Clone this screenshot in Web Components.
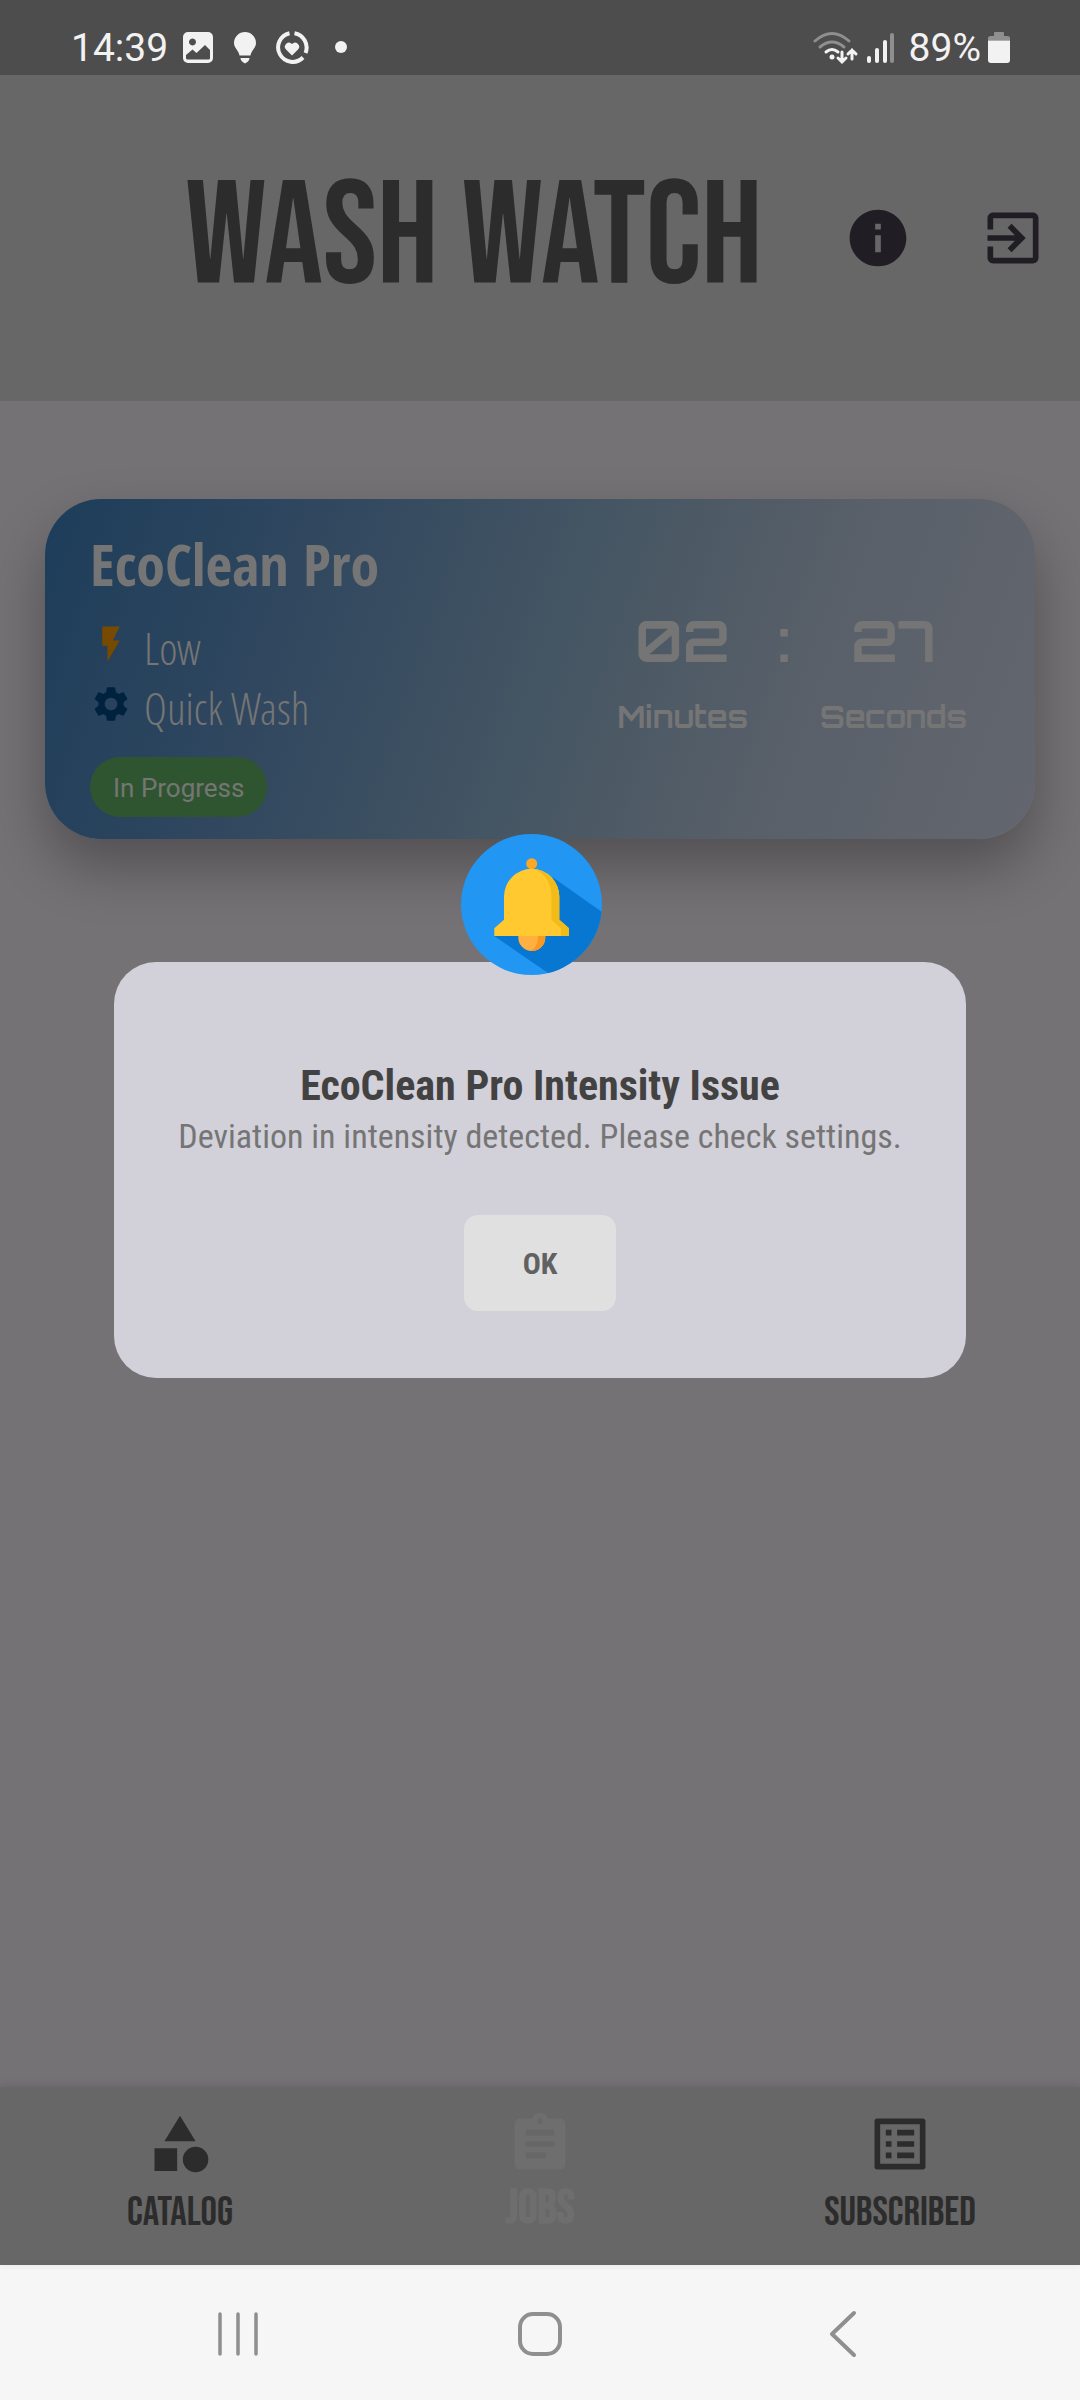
<!DOCTYPE html>
<html lang="en">
<head>
<meta charset="utf-8">
<meta name="viewport" content="width=device-width, initial-scale=1">
<title>Wash Watch</title>
<style>
  body { margin: 0; font-family: Roboto, "Liberation Sans", sans-serif; background: #757276; }
</style>
</head>
<body>
<wash-app></wash-app>

<script>
const define = (name, html, setup) => {
  const template = document.createElement('template');
  template.innerHTML = html;
  customElements.define(name, class extends HTMLElement {
    constructor() {
      super();
      this.attachShadow({ mode: 'open' }).append(template.content.cloneNode(true));
    }
    connectedCallback() { if (setup) setup(this, this.shadowRoot); }
  });
};

/* Icons on a 24-unit grid */
const ICONS = {
  info: 'M12 2C6.48 2 2 6.48 2 12s4.48 10 10 10 10-4.48 10-10S17.52 2 12 2zm1 15h-2v-6h2v6zm0-8h-2V7h2v2z',
  exit: 'M10.09 15.59L11.5 17l5-5-5-5-1.41 1.41L12.67 11H3v2h9.67l-2.58 2.59zM19 3H5c-1.11 0-2 .9-2 2v4h2V5h14v14H5v-4H3v4c0 1.1.89 2 2 2h14c1.1 0 2-.9 2-2V5c0-1.1-.9-2-2-2z',
  bolt: 'M7 2v11h3v9l7-12h-4l4-8z',
  gear: 'M19.14 12.94c.04-.3.06-.61.06-.94 0-.32-.02-.64-.07-.94l2.03-1.58c.18-.14.23-.41.12-.61l-1.92-3.32c-.12-.22-.37-.29-.59-.22l-2.39.96c-.5-.38-1.03-.7-1.62-.94l-.36-2.54c-.04-.24-.24-.41-.48-.41h-3.84c-.24 0-.43.17-.47.41l-.36 2.54c-.59.24-1.13.57-1.62.94l-2.39-.96c-.22-.08-.47 0-.59.22L2.74 8.87c-.12.21-.08.47.12.61l2.03 1.58c-.05.3-.09.63-.09.94s.02.64.07.94l-2.03 1.58c-.18.14-.23.41-.12.61l1.92 3.32c.12.22.37.29.59.22l2.39-.96c.5.38 1.03.7 1.62.94l.36 2.54c.05.24.24.41.48.41h3.84c.24 0 .44-.17.47-.41l.36-2.54c.59-.24 1.13-.56 1.62-.94l2.39.96c.22.08.47 0 .59-.22l1.92-3.32c.12-.22.07-.47-.12-.61l-2.01-1.58zM12 15.6c-1.98 0-3.6-1.62-3.6-3.6s1.62-3.6 3.6-3.6 3.6 1.62 3.6 3.6-1.62 3.6-3.6 3.6z',
  category: 'M12 2l-5.5 9h11zM17.5 13a4.5 4.5 0 1 0 0 9 4.5 4.5 0 0 0 0-9zM3 13.5h8v8H3z',
  jobs: 'M19 3h-4.18C14.4 1.84 13.3 1 12 1s-2.4.84-2.82 2H5c-1.1 0-2 .9-2 2v14c0 1.1.9 2 2 2h14c1.1 0 2-.9 2-2V5c0-1.1-.9-2-2-2zm-7 0c.55 0 1 .45 1 1s-.45 1-1 1-1-.45-1-1 .45-1 1-1zm2 14H7v-2h7v2zm3-4H7v-2h10v2zm0-4H7V7h10v2z',
  list: 'M19 5v14H5V5h14m1.1-2H3.9c-.5 0-.9.4-.9.9v16.2c0 .4.4.9.9.9h16.2c.4 0 .9-.5.9-.9V3.9c0-.5-.5-.9-.9-.9zM11 7h6v2h-6V7zm0 4h6v2h-6v-2zm0 4h6v2h-6v-2zM7 7h2v2H7V7zm0 4h2v2H7v-2zm0 4h2v2H7v-2z'
};

define('ui-icon', `
  <style>
    :host { display: block; flex: none; width: var(--size, 68px); height: var(--size, 68px); }
    svg { display: block; width: 100%; height: 100%; fill: currentColor; }
  </style>
  <svg viewBox="0 0 24 24" aria-hidden="true"><path></path></svg>`,
  (el, root) => root.querySelector('path').setAttribute('d', ICONS[el.getAttribute('name')] || ''));

define('status-bar', `
  <style>
    :host { display: flex; align-items: flex-end; justify-content: space-between; height: 75px; box-sizing: border-box;
      padding: 0 70px 7px 71px; background: #4d4d4d; color: #f2f2f2; font-size: 39px; line-height: 40px; }
    div { display: flex; align-items: center; }
    .left { gap: 13px; }
    svg { display: block; fill: currentColor; height: 40px; }
    .battery { margin-left: 7px; }
    .signal { margin: 0 14px 0 8px; }
    .dot { margin-left: 12px; }
  </style>
  <div class="left">
    <span>14:39</span>
    <svg width="34" viewBox="0 0 34 40"><path fill-rule="evenodd" d="M7 4h20a5 5 0 0 1 5 5v21a5 5 0 0 1-5 5H7a5 5 0 0 1-5-5V9a5 5 0 0 1 5-5zM11.500 10.500a3.500 3.500 0 1 0 .01 0zM5 27v3q0 1.500 1.500 1.500h21q1.500 0 1.500-1.500v-8l-5-5-8.500 8-4-3.500z"/></svg>
    <svg width="34" viewBox="0 0 34 40"><path d="M17 4a11 11 0 0 1 11 11c0 5-4.500 7-5.500 12.500h-11C10.500 22 6 20 6 15A11 11 0 0 1 17 4zM12.500 30h9q0 3-4.500 5.500-4.500-2.500-4.500-5.500z"/></svg>
    <svg width="34" viewBox="0 0 34 40"><g fill="none" stroke="currentColor" stroke-width="4"><path d="M14.500 5.200A14.500 14.500 0 1 0 28 29.500"/><path d="M19.500 5.200A14.500 14.500 0 0 1 30.500 25"/></g><path d="M17 27.500l-6-6a4 4 0 0 1 6-5.500 4 4 0 0 1 6 5.500z"/></svg>
    <svg class="dot" width="14" viewBox="0 0 14 40"><circle cx="7" cy="19" r="6"/></svg>
  </div>
  <div>
    <svg width="46" viewBox="0 0 46 40"><g fill="none" stroke="currentColor" stroke-width="3" stroke-linecap="round"><g opacity=".4"><path d="M2 13q17-15 34 0"/><path d="M7 19q12-10 24 0"/></g><path d="M13 24q6-5 12 0"/><path d="M29 24v10m-4-4l4 4 4-4M39 31V22m-4 4l4-4 4 4"/></g><circle cx="19" cy="29" r="2.500"/></svg>
    <svg class="signal" width="28" viewBox="0 0 28 40"><rect x="0" y="28" width="4" height="7" rx="2"/><rect x="8" y="20" width="4" height="15" rx="2"/><rect x="16" y="12" width="4" height="23" rx="2"/><rect x="23" y="5" width="4" height="30" rx="2" opacity=".4"/></svg>
    <span>89%</span>
    <svg class="battery" width="22" viewBox="0 0 22 40"><path opacity=".4" d="M0 12.500V10q0-2 3-2h3V5q0-1 1-1h8q1 0 1 1v3h3q3 0 3 2v2.500z"/><path d="M0 12.500h22V32q0 3-3 3H3q-3 0-3-3z"/></svg>
  </div>`);

define('app-header', `
  <style>
    :host { display: flex; align-items: center; height: 326px; background: #676767; color: #2c2c2c; }
    h1 { flex: 1; margin: 0; padding: 4px 0 0 138px; text-align: center; white-space: nowrap;
      font: 400 146px/180px "Bebas Neue", "Roboto Condensed", sans-serif; }
    nav { display: flex; color: #201d24; }
    button { all: unset; display: grid; place-items: center; width: 135px; height: 135px; cursor: pointer; }
  </style>
  <h1><slot></slot></h1>
  <nav>
    <button aria-label="Information"><ui-icon name="info"></ui-icon></button>
    <button aria-label="Sign out"><ui-icon name="exit"></ui-icon></button>
  </nav>`);

define('job-detail', `
  <style>
    :host { display: flex; height: 60px; padding-top: 8px; box-sizing: border-box; gap: 12px; --size: 42px; }
    ui-icon { color: var(--icon); }
    span { font: 300 44px/50px "Open Sans Condensed Light", "Open Sans Condensed", sans-serif; }
  </style>
  <ui-icon></ui-icon><span><slot></slot></span>`,
  (el, root) => {
    const icon = document.createElement('ui-icon');
    icon.setAttribute('name', el.getAttribute('icon'));
    root.querySelector('ui-icon').replaceWith(icon);
  });

define('time-unit', `
  <style>
    :host { display: flex; flex-direction: column; align-items: center;
      font-family: Orbitron, "DejaVu Sans", sans-serif; font-weight: 700; white-space: nowrap; }
    .value { font-size: 57px; line-height: 72px; }
    .label { margin-top: 23px; font-size: 30px; line-height: 36px; }
  </style>
  <span class="value"><slot></slot></span><span class="label"><slot name="label"></slot></span>`);

define('job-card', `
  <style>
    :host { display: flex; justify-content: space-between; align-items: flex-start; height: 340px; box-sizing: border-box;
      padding: 0 68px 0 45px; border-radius: 56px; color: #757575;
      background: linear-gradient(109deg, #1d3d5a, #30475f 25%, #445563 50%, #596069 75%, #63666f);
      box-shadow: 0 28px 56px rgba(0, 0, 0, .3); }
    .info { padding-top: 36px; }
    h2 { margin: 0 0 22px; font: 700 58px/58px "Open Sans Condensed", "Roboto Condensed", sans-serif; }
    .chip { width: fit-content; margin-top: 22px; padding: 2px 23px 0; border-radius: 30px; background: #2f5530;
      font-size: 26px; line-height: 58px; }
    .timer { display: flex; padding-top: 105px; }
    .colon { width: 72px; text-align: center; font: 700 57px/72px Orbitron, "DejaVu Sans", sans-serif; }
  </style>
  <div class="info">
    <h2><slot name="title"></slot></h2>
    <slot></slot>
    <div class="chip"><slot name="status"></slot></div>
  </div>
  <div class="timer">
    <slot name="minutes"></slot><span class="colon">:</span><slot name="seconds"></slot>
  </div>`);

define('alert-dialog', `
  <style>
    :host { position: absolute; inset: 0; display: flex; align-items: center; padding: 0 114px; }
    section { position: relative; flex: 1; display: flex; flex-direction: column; align-items: center; box-sizing: border-box;
      padding: 98px 40px 67px; border-radius: 42px; background: #d2d0d9; text-align: center;
      font-family: "Roboto Condensed", Roboto, sans-serif; }
    svg { position: absolute; top: -128px; left: calc(50% - 79px); width: 141px; height: 141px; }
    h2 { margin: 0; font-size: 42px; line-height: 52px; font-weight: 700; color: #424242; }
    p { margin: 0 0 55px; font-size: 34px; line-height: 48px; color: #757575; }
    button { border: 0; border-radius: 14px; padding: 2px 0 0; width: 152px; height: 96px; background: #e0e0e0; color: #616161;
      font: 700 30px/36px "Roboto Condensed", Roboto, sans-serif; }
  </style>
  <section role="alertdialog" aria-labelledby="title">
    <svg viewBox="0 0 141 141" aria-hidden="true">
      <clipPath id="disc"><circle cx="70.500" cy="70.500" r="70.500"/></clipPath>
      <g clip-path="url(#disc)">
        <path fill="#2196f3" d="M0 0h141v141H0z"/>
        <path fill="#0877d2" d="M92 43.500L141 78v63H90L33.300 102z"/>
      </g>
      <path fill="#ffb040" d="M57.300 100h27v3.500a13.500 13.500 0 0 1-27 0z"/>
      <path fill="#fb9820" d="M77 100h7.300v3.500A13.500 13.500 0 0 1 69.500 117Q77 113 77 103z"/>
      <circle cx="70.700" cy="29.700" r="5.500" fill="#fca726"/>
      <path fill="#ffc92f" d="M33.300 102v-7.700l9.700-8.600V62.500a27.650 27.650 0 0 1 55.300 0v23.200l9.700 8.600V102z"/>
      <path fill="#f2bb18" d="M70.700 34.850a27.650 27.650 0 0 1 27.600 27.650v23.200l9.700 8.600V102h-8v-7.700l-9.500-8.600V62.500C90.500 49 83 37 70.700 34.850z"/>
    </svg>
    <h2 id="title"><slot name="title"></slot></h2>
    <p><slot></slot></p>
    <button><slot name="action"></slot></button>
  </section>`);

define('tab-item', `
  <style>
    :host { flex: 1; display: flex; justify-content: center; }
    a { display: flex; flex-direction: column; align-items: center; color: #2c2c2c; text-decoration: none;
      font: 400 41px/48px "Bebas Neue", "Roboto Condensed", sans-serif; }
    .label { margin-top: 11px; }
    :host([selected]) a { color: #6e6e6e; font-weight: 700; font-size: 48px; }
    :host([selected]) .label { margin-top: 7px; }
  </style>
  <a href="#"><ui-icon></ui-icon><span class="label"><slot></slot></span></a>`,
  (el, root) => {
    const icon = document.createElement('ui-icon');
    icon.setAttribute('name', el.getAttribute('icon'));
    root.querySelector('ui-icon').replaceWith(icon);
    if (el.hasAttribute('selected')) root.querySelector('a').setAttribute('aria-current', 'page');
  });

define('tab-bar', `
  <style>
    :host { display: block; background: #676767; box-shadow: 0 -2px 8px rgba(0, 0, 0, .1); }
    nav { display: flex; height: 178px; padding-top: 23px; box-sizing: border-box; }
  </style>
  <nav><slot></slot></nav>`);

define('system-nav', `
  <style>
    :host { display: flex; justify-content: center; gap: 166px; height: 135px; box-sizing: border-box; padding-top: 2px; align-items: center; background: #f6f6f6; }
    button { all: unset; width: 136px; height: 96px; display: grid; place-items: center; }
    svg { display: block; width: 48px; height: 48px; fill: none; stroke: #8f8f8f; stroke-width: 4; stroke-linecap: round; stroke-linejoin: round; }
  </style>
  <button aria-label="Recent apps"><svg viewBox="0 0 48 48"><path stroke-width="3.500" d="M6 4v40M24 4v40M42 4v40"/></svg></button>
  <button aria-label="Home"><svg viewBox="0 0 48 48"><rect x="4" y="4" width="40" height="40" rx="13"/></svg></button>
  <button aria-label="Back"><svg viewBox="0 0 48 48"><path d="M36 3L14 24l22 21"/></svg></button>`);

define('wash-app', `
  <style>
    :host { display: flex; flex-direction: column; min-height: 100vh; }
    .app { position: relative; flex: 1; display: flex; flex-direction: column; }
    main { flex: 1; padding: 98px 45px; }
  </style>
  <status-bar></status-bar>
  <div class="app">
    <app-header>WASH WATCH</app-header>
    <main>
      <job-card>
        <span slot="title">EcoClean Pro</span>
        <job-detail icon="bolt" style="--icon: #784a00">Low</job-detail>
        <job-detail icon="gear" style="--icon: #00223f">Quick Wash</job-detail>
        <span slot="status">In Progress</span>
        <time-unit slot="minutes">02<span slot="label">Minutes</span></time-unit>
        <time-unit slot="seconds">27<span slot="label">Seconds</span></time-unit>
      </job-card>
    </main>
    <tab-bar>
      <tab-item icon="category">CATALOG</tab-item>
      <tab-item icon="jobs" selected>JOBS</tab-item>
      <tab-item icon="list">SUBSCRIBED</tab-item>
    </tab-bar>
    <alert-dialog>
      <span slot="title">EcoClean Pro Intensity Issue</span>
      Deviation in intensity detected. Please check settings.
      <span slot="action">OK</span>
    </alert-dialog>
  </div>
  <system-nav></system-nav>`);
</script>
</body>
</html>
